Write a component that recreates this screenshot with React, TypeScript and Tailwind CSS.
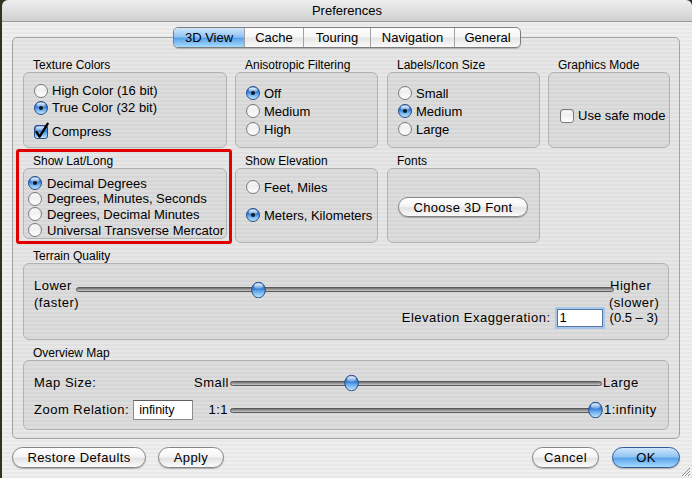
import React from "react";

function Defs() {
  return (
    <svg width="0" height="0" className="absolute">
      <defs>
        <linearGradient id="gWhite" x1="0" y1="0" x2="0" y2="1">
          <stop offset="0" stopColor="#d9d9d9" />
          <stop offset="0.5" stopColor="#f2f2f2" />
          <stop offset="1" stopColor="#ffffff" />
        </linearGradient>
        <linearGradient id="gBlue" x1="0" y1="0" x2="0" y2="1">
          <stop offset="0" stopColor="#4f8fd8" />
          <stop offset="0.45" stopColor="#3a7fd3" />
          <stop offset="0.55" stopColor="#5aa3ea" />
          <stop offset="1" stopColor="#c4ecff" />
        </linearGradient>
        <linearGradient id="gHi" x1="0" y1="0" x2="0" y2="1">
          <stop offset="0" stopColor="#ffffff" stopOpacity="0.9" />
          <stop offset="1" stopColor="#ffffff" stopOpacity="0.15" />
        </linearGradient>
      </defs>
    </svg>
  );
}

function Radio({ on }: { on?: boolean }) {
  return (
    <svg width="14" height="14" viewBox="0 0 14 14" className="shrink-0">
      <circle cx="7" cy="7" r="6.5" fill={on ? "url(#gBlue)" : "url(#gWhite)"} stroke={on ? "#2b4d85" : "#7a7a7a"} strokeWidth="1" />
      <ellipse cx="7" cy="4" rx="4.2" ry="2.4" fill="url(#gHi)" />
      {on && <circle cx="7" cy="7" r="2" fill="#0e1622" />}
    </svg>
  );
}

function Check({ on }: { on?: boolean }) {
  return (
    <svg width="14" height="14" viewBox="0 0 14 14" className="shrink-0 overflow-visible">
      <rect x="0.5" y="0.5" width="13" height="13" rx="2.5" fill={on ? "url(#gBlue)" : "url(#gWhite)"} stroke={on ? "#2b4d85" : "#7a7a7a"} />
      <rect x="2" y="1.5" width="10" height="4.5" rx="2" fill="url(#gHi)" />
      {on && <path d="M2.6 7.2 L5.6 11.6 L13.6 -1.2" fill="none" stroke="#000" strokeWidth="2.4" strokeLinejoin="round" strokeLinecap="round" />}
    </svg>
  );
}

function Thumb({ className }: { className: string }) {
  return (
    <svg width="15" height="17" viewBox="0 0 15 17" className={"absolute top-1/2 -translate-y-1/2 " + className}>
      <ellipse cx="7.5" cy="8.5" rx="6.8" ry="7.8" fill="url(#gBlue)" stroke="#2b4d85" strokeWidth="1" />
      <ellipse cx="7.5" cy="4.6" rx="4.4" ry="2.8" fill="url(#gHi)" />
    </svg>
  );
}

function Track({ className, children }: { className: string; children?: React.ReactNode }) {
  return (
    <div className={"relative h-[5px] rounded-full border border-[#5a5a5a] bg-[linear-gradient(180deg,#707070,#c9c9c9)] " + className}>
      {children}
    </div>
  );
}

function Group({ title, className, children }: { title: string; className: string; children?: React.ReactNode }) {
  return (
    <div className="flex flex-col">
      <div className="h-[14px] pl-[10px] text-[12px] leading-[14px] tracking-normal">{title}</div>
      <div className={"rounded-[6px] border border-[#b2b2b2] bg-black/[0.045] " + className}>{children}</div>
    </div>
  );
}

function RadioRow({ on, label, className }: { on?: boolean; label: string; className: string }) {
  return (
    <div className={"flex items-center " + className}>
      <Radio on={on} />
      <span className="text-[13px] leading-none whitespace-nowrap">{label}</span>
    </div>
  );
}

function Button({ children, className, blue }: { children: React.ReactNode; className: string; blue?: boolean }) {
  return (
    <div
      className={
        "flex items-center justify-center rounded-full border text-[13px] leading-none shadow-[0_1px_1px_rgba(0,0,0,0.25)] " +
        (blue
          ? "border-[#2f5a96] bg-[linear-gradient(180deg,#cfe6fb_0%,#92c5f2_45%,#5ca4ea_55%,#a6dcff_100%)] "
          : "border-[#858585] bg-[linear-gradient(180deg,#ffffff_0%,#f5f5f5_45%,#e3e3e3_55%,#fbfbfb_100%)] ") +
        className
      }
    >
      {children}
    </div>
  );
}

export default function App() {
  return (
    <div className="relative w-[692px] h-[478px] overflow-hidden bg-[#30341f] pl-[2px] font-['Liberation_Sans',Arial,sans-serif] text-black">
      <Defs />
      <div className="relative flex h-[478px] w-[690px] flex-col overflow-hidden rounded-t-[6px]">
        <div className="flex h-[22px] shrink-0 items-center justify-center border-b border-[#9a9a9a] bg-[linear-gradient(180deg,#eeeeee,#d0d0d0)] text-[13px]">
          Preferences
        </div>
        <div className="flex flex-1 flex-col bg-[image:repeating-linear-gradient(180deg,#efefef_0px,#efefef_2px,#e8e8e8_2px,#e8e8e8_4px)]">
          {/* tabs */}
          <div className="relative z-10 mt-[5px] flex justify-center">
            <div className="flex h-[21px] overflow-hidden rounded-[5px] border border-[#7d7d7d] bg-[linear-gradient(180deg,#ffffff_0%,#f6f6f6_45%,#e6e6e6_55%,#fafafa_100%)] text-[13px] shadow-[0_1px_1px_rgba(0,0,0,0.2)]">
              <div className="flex w-[70px] items-center justify-center bg-[linear-gradient(180deg,#cfe6fb_0%,#92c5f2_45%,#5ca4ea_55%,#a6dcff_100%)]">3D View</div>
              <div className="flex w-[59px] items-center justify-center border-l border-[#a2a2a2]">Cache</div>
              <div className="flex w-[67px] items-center justify-center border-l border-[#a2a2a2]">Touring</div>
              <div className="flex w-[84px] items-center justify-center border-l border-[#a2a2a2]">Navigation</div>
              <div className="flex w-[66px] items-center justify-center border-l border-[#a2a2a2]">General</div>
            </div>
          </div>
          {/* panel */}
          <div className="-mt-[11px] ml-[10px] flex w-[668px] flex-col rounded-[5px] border border-[#a3a3a3] bg-black/[0.03] pb-[8px] pl-[10px] pt-[20px]">
            {/* row 1 */}
            <div className="flex">
              <Group title="Texture Colors" className="h-[76px] w-[204px] pl-[10px] pt-[9px]">
                <RadioRow label="High Color (16 bit)" className="h-[17px] gap-[4px]" />
                <RadioRow on label="True Color (32 bit)" className="h-[17px] gap-[4px]" />
                <div className="mt-[7px] flex h-[17px] items-center gap-[4px]">
                  <Check on />
                  <span className="text-[13px] leading-none">Compress</span>
                </div>
              </Group>
              <div className="w-[8px]" />
              <Group title="Anisotropic Filtering" className="h-[76px] w-[143px] pl-[10px] pt-[11px]">
                <RadioRow on label="Off" className="h-[18px] gap-[4px]" />
                <RadioRow label="Medium" className="h-[18px] gap-[4px]" />
                <RadioRow label="High" className="h-[18px] gap-[4px]" />
              </Group>
              <div className="w-[9px]" />
              <Group title="Labels/Icon Size" className="h-[76px] w-[153px] pl-[10px] pt-[11px]">
                <RadioRow label="Small" className="h-[18px] gap-[4px]" />
                <RadioRow on label="Medium" className="h-[18px] gap-[4px]" />
                <RadioRow label="Large" className="h-[18px] gap-[4px]" />
              </Group>
              <div className="w-[8px]" />
              <Group title="Graphics Mode" className="h-[76px] w-[122px] pl-[11px] pt-[34px]">
                <div className="flex h-[17px] items-center gap-[4px]">
                  <Check />
                  <span className="text-[13px] leading-none whitespace-nowrap">Use safe mode</span>
                </div>
              </Group>
            </div>
            {/* row 2 */}
            <div className="relative mt-[6px] flex">
              <Group title="Show Lat/Long" className="h-[71px] w-[204px] pl-[4px] pt-[6px]">
                <RadioRow on label="Decimal Degrees" className="h-[16px] gap-[5px]" />
                <RadioRow label="Degrees, Minutes, Seconds" className="h-[15px] gap-[5px]" />
                <RadioRow label="Degrees, Decimal Minutes" className="h-[16px] gap-[5px]" />
                <RadioRow label="Universal Transverse Mercator" className="h-[16px] gap-[5px]" />
              </Group>
              <div className="w-[8px]" />
              <Group title="Show Elevation" className="h-[75px] w-[143px] pl-[10px] pt-[9px]">
                <RadioRow label="Feet, Miles" className="h-[18px] gap-[4px]" />
                <RadioRow on label="Meters, Kilometers" className="mt-[10px] h-[18px] gap-[4px]" />
              </Group>
              <div className="w-[9px]" />
              <Group title="Fonts" className="h-[75px] w-[153px] pl-[10px] pt-[28px]">
                <Button className="h-[20px] w-[130px] tracking-[0.3px]">Choose 3D Font</Button>
              </Group>
              <div className="pointer-events-none absolute left-[-7px] top-[-5px] h-[95px] w-[216px] rounded-[3px] border-[3px] border-[#e00000]" />
            </div>
            {/* terrain */}
            <div className="mt-[6px]">
              <Group title="Terrain Quality" className="h-[77px] w-[646px] px-[10px] pt-[13px] text-[13px] tracking-[0.5px]">
                <div className="flex">
                  <div className="w-[42px] leading-[17px] whitespace-nowrap">
                    <div>Lower</div>
                    <div>(faster)</div>
                  </div>
                  <div className="pt-[10px]">
                    <Track className="w-[538px]">
                      <Thumb className="left-[174px]" />
                    </Track>
                  </div>
                  <div className="-ml-[5px] leading-[17px] whitespace-nowrap">
                    <div className="pl-[1px]">Higher</div>
                    <div>(slower)</div>
                  </div>
                </div>
                <div className="-mt-[4px] flex h-[22px] items-center justify-end">
                  <span>Elevation Exaggeration:</span>
                  <div className="ml-[4px] h-[22px] w-[50px] border-2 border-[#a6c6ee]">
                    <div className="flex h-full items-center border border-[#56779f] bg-white pl-[2px]">1</div>
                  </div>
                  <span className="ml-[5px] tracking-normal">(0.5 – 3)</span>
                </div>
              </Group>
            </div>
            {/* overview */}
            <div className="mt-[6px]">
              <Group title="Overview Map" className="h-[70px] w-[646px] px-[10px] pt-[11px] text-[13px] tracking-[0.5px]">
                <div className="flex h-[22px] items-center">
                  <div className="flex w-[196px] justify-between pr-[1px]">
                    <span>Map Size:</span>
                    <span>Small</span>
                  </div>
                  <Track className="w-[372px]">
                    <Thumb className="left-[113px]" />
                  </Track>
                  <span className="ml-[1px]">Large</span>
                </div>
                <div className="mt-[5px] flex h-[22px] items-center">
                  <div className="flex w-[196px] items-center pr-[2px]">
                    <span>Zoom Relation:</span>
                    <div className="ml-[4px] flex h-[20px] w-[60px] items-center border border-[#8c8c8c] border-t-[#5e5e5e] bg-white pl-[5px] text-[12.5px] tracking-normal">
                      infinity
                    </div>
                    <span className="ml-auto">1:1</span>
                  </div>
                  <Track className="w-[364px]">
                    <Thumb className="left-[357px]" />
                  </Track>
                  <span className="ml-[10px]">1:infinity</span>
                </div>
              </Group>
            </div>
          </div>
          {/* bottom buttons */}
          <div className="mt-[8px] flex justify-between pl-[10px] pr-[12px] tracking-[0.4px]">
            <div className="flex">
              <Button className="h-[21px] w-[134px]">Restore Defaults</Button>
              <Button className="ml-[12px] h-[21px] w-[66px]">Apply</Button>
            </div>
            <div className="flex">
              <Button className="h-[21px] w-[67px]">Cancel</Button>
              <Button blue className="ml-[13px] h-[21px] w-[68px]">OK</Button>
            </div>
          </div>
        </div>
        <svg width="11" height="11" viewBox="0 0 11 11" className="absolute bottom-[1px] right-[1px]">
          <path d="M10 2 L2 10 M10 5 L5 10 M10 8 L8 10" stroke="#8a8a8a" strokeWidth="1" />
          <path d="M10.5 3 L3 10.5 M10.5 6 L6 10.5 M10.5 9 L9 10.5" stroke="#ffffff" strokeWidth="1" />
        </svg>
      </div>
    </div>
  );
}
